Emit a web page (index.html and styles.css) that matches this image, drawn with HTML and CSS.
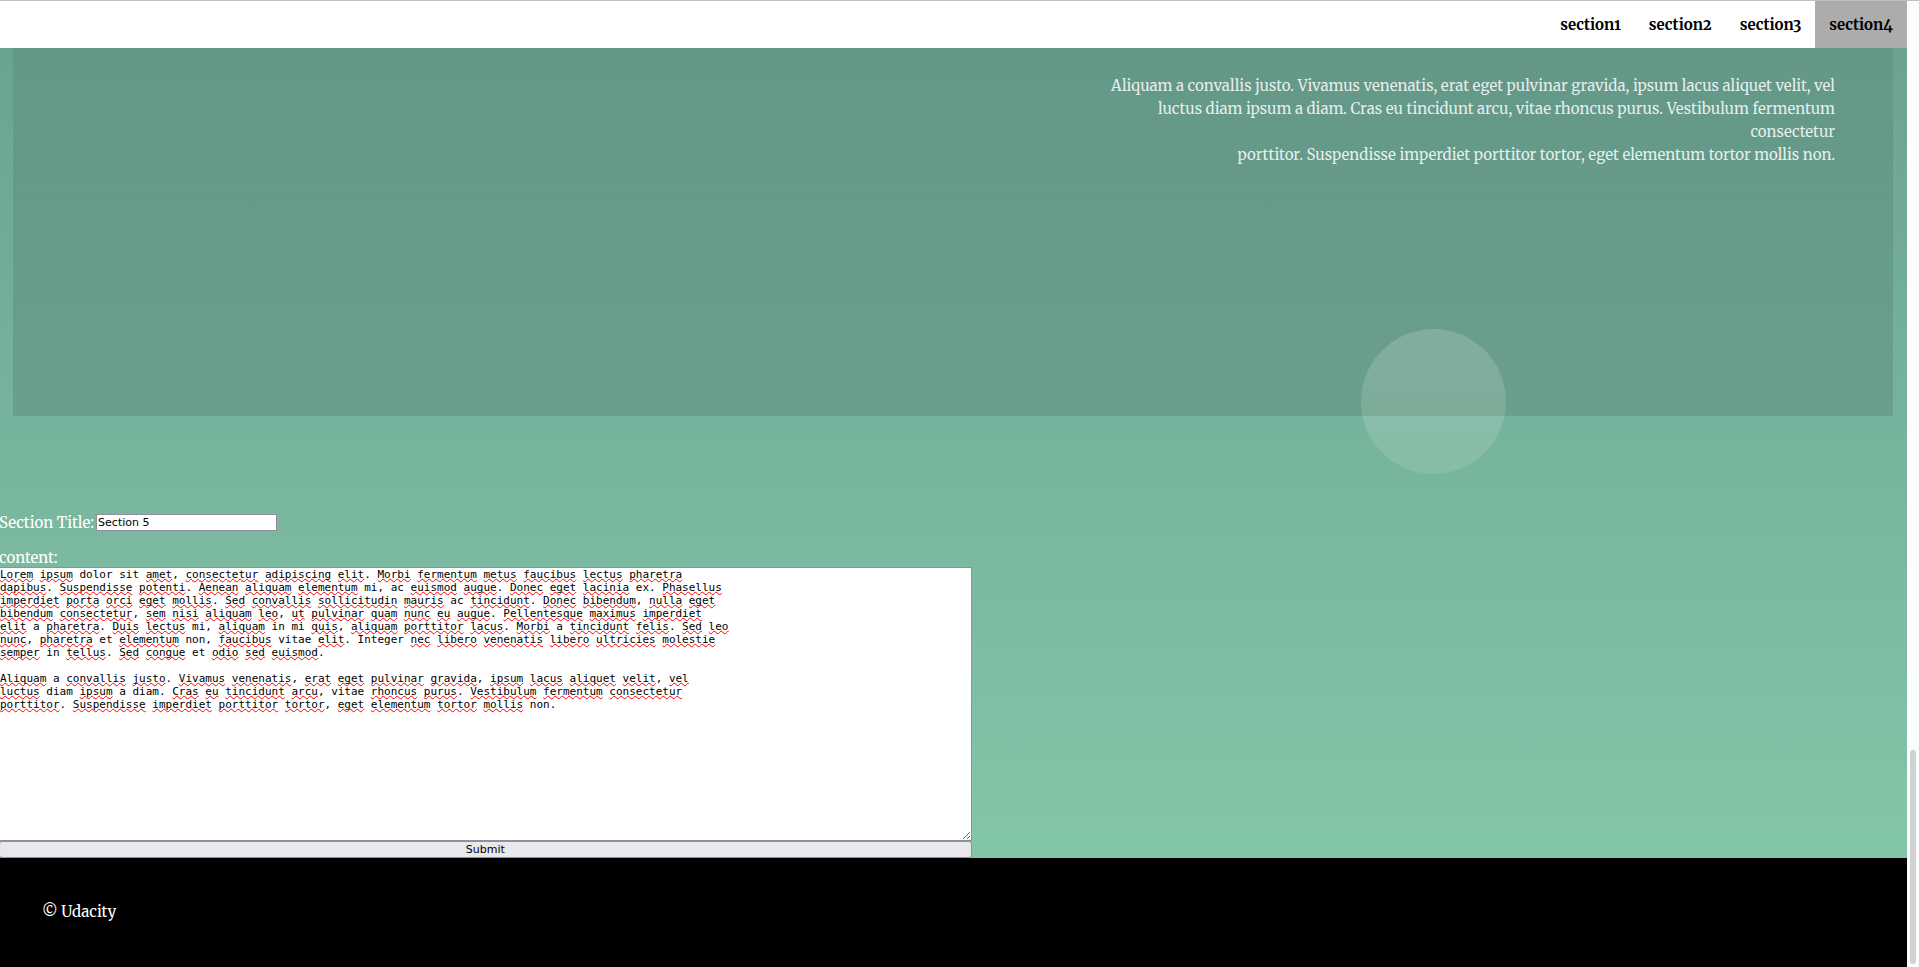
FILE: index.html
```html
<!DOCTYPE html>
<html lang="en">
<head>
<meta charset="utf-8">
<title>Landing page</title>
<link rel="stylesheet" href="styles.css">
</head>
<body>
<div class="page">
  <header class="navbar">
    <nav class="menu">
      <a class="menu-link" href="#section1">section1</a>
      <a class="menu-link" href="#section2">section2</a>
      <a class="menu-link" href="#section3">section3</a>
      <a class="menu-link active" href="#section4">section4</a>
    </nav>
  </header>
  <main class="main">
    <section class="section" id="section4">
      <p class="section-text">Aliquam a convallis justo. Vivamus venenatis, erat eget pulvinar gravida, ipsum lacus aliquet velit, vel<br>luctus diam ipsum a diam. Cras eu tincidunt arcu, vitae rhoncus purus. Vestibulum fermentum<br>consectetur<br>porttitor. Suspendisse imperdiet porttitor tortor, eget elementum tortor mollis non.</p>
      <span class="circle"></span>
    </section>
    <form class="form">
      <div class="title-row">
        <label for="title">Section Title:</label>
        <input class="title-input" id="title" type="text" value="Section 5">
      </div>
      <label class="content-label" for="content">content:</label>
      <div class="editor">
        <div class="squiggles" aria-hidden="true"></div>
        <textarea class="content" id="content" spellcheck="false">Lorem ipsum dolor sit amet, consectetur adipiscing elit. Morbi fermentum metus faucibus lectus pharetra
dapibus. Suspendisse potenti. Aenean aliquam elementum mi, ac euismod augue. Donec eget lacinia ex. Phasellus
imperdiet porta orci eget mollis. Sed convallis sollicitudin mauris ac tincidunt. Donec bibendum, nulla eget
bibendum consectetur, sem nisi aliquam leo, ut pulvinar quam nunc eu augue. Pellentesque maximus imperdiet
elit a pharetra. Duis lectus mi, aliquam in mi quis, aliquam porttitor lacus. Morbi a tincidunt felis. Sed leo
nunc, pharetra et elementum non, faucibus vitae elit. Integer nec libero venenatis libero ultricies molestie
semper in tellus. Sed congue et odio sed euismod.

Aliquam a convallis justo. Vivamus venenatis, erat eget pulvinar gravida, ipsum lacus aliquet velit, vel
luctus diam ipsum a diam. Cras eu tincidunt arcu, vitae rhoncus purus. Vestibulum fermentum consectetur
porttitor. Suspendisse imperdiet porttitor tortor, eget elementum tortor mollis non.</textarea>
      </div>
      <button class="submit" type="submit">Submit</button>
    </form>
  </main>
  <footer class="footer"><p class="copyright">© Udacity</p></footer>
</div>
<div class="scrollbar"><div class="thumb"></div></div>
<script src="script.js"></script>
</body>
</html>
```

FILE: styles.css
```css
* { box-sizing: border-box; }

body {
  margin: 0;
  min-height: 100vh;
  display: flex;
  border-top: 1px solid #c0c0c0;
  background: #fcfcfc;
  color: #fff;
  font-family: Merriweather, "Liberation Serif", serif;
  font-size: 15px;
  font-variant-numeric: oldstyle-nums;
  line-height: 23px;
}

.page {
  flex: 1;
  min-width: 0;
  display: flex;
  flex-direction: column;
}

.navbar { background: #fff; }

.menu {
  display: flex;
  justify-content: flex-end;
}

.menu-link {
  padding: 12px 14px;
  color: #000;
  font-weight: bold;
  text-decoration: none;
}

.menu-link.active { background: #acacac; }

.main {
  flex: 1;
  background: linear-gradient(#6ba392, #84c6a8);
}

.section {
  position: relative;
  min-height: 368px;
  margin: 0 14px 0 13px;
  padding: 26px 58px 0;
  background: linear-gradient(rgba(0, 0, 0, 0.07), rgba(0, 0, 0, 0.11));
}

.section-text {
  margin: 0;
  color: rgba(255, 255, 255, 0.85);
  text-align: right;
}

.circle {
  position: absolute;
  right: 387px;
  bottom: -58px;
  width: 145px;
  height: 145px;
  border-radius: 50%;
  background: linear-gradient(rgba(255, 255, 255, 0.17), rgba(255, 255, 255, 0.11));
}

.form {
  display: flex;
  flex-direction: column;
  width: 51%;
  margin-left: -1px;
  padding-top: 95px;
}

.title-row {
  display: flex;
  align-items: center;
  gap: 2px;
  margin-bottom: 14px;
}

.title-input {
  width: 181px;
  height: 17px;
  padding: 0 1px;
  border: 1px solid #8f8f9d;
  background: #fff;
  color: #000;
  font: 11px "DejaVu Sans", sans-serif;
}

.content-label { line-height: 19px; }

.editor {
  position: relative;
  height: 274px;
  background: #fff;
}

.content,
.squiggles {
  width: 100%;
  height: 100%;
  margin: 0;
  padding: 0;
  border: 1px solid #8f8f9d;
  font: 11px/13px "DejaVu Sans Mono", monospace;
  white-space: pre-wrap;
}

.content {
  position: relative;
  display: block;
  background: transparent;
  color: #000;
}

.squiggles {
  position: absolute;
  inset: 0;
  overflow: hidden;
}

.typo {
  text-decoration: underline wavy #f00 1px;
  text-decoration-skip-ink: none;
  text-underline-offset: 0;
}

.submit {
  height: 17px;
  padding: 0;
  border: 1px solid #8f8f9d;
  border-radius: 3px;
  background: #e9e9ed;
  color: #000;
  font: 11px/15px "DejaVu Sans", sans-serif;
}

.footer {
  padding: 42px 42px 44px;
  background: #000;
}

.copyright { margin: 0; }

.scrollbar {
  display: flex;
  align-items: flex-end;
  justify-content: center;
  width: 12px;
  padding-bottom: 3px;
}

.thumb {
  width: 6px;
  height: 214px;
  border-radius: 3px;
  background: #d1d1d1;
}
```

FILE: script.js
```js
// Underlines unknown words on a layer of blanks behind the text box.
const known = new Set(["dolor", "sit", "mi", "ac", "ex", "a", "in", "et", "non", "vitae", "Integer", "diam"]);
const field = document.querySelector(".content");
const layer = document.querySelector(".squiggles");

function mark() {
  layer.replaceChildren();
  for (const part of field.value.match(/[A-Za-z]+|\n|[^A-Za-z\n]+/g) || []) {
    if (part === "\n") {
      layer.append("\n");
      continue;
    }
    const blank = "\u00a0".repeat(part.length);
    if (/[A-Za-z]/.test(part) && !known.has(part)) {
      const span = document.createElement("span");
      span.className = "typo";
      span.textContent = blank;
      layer.append(span);
    } else {
      layer.append(blank);
    }
  }
}

field.addEventListener("input", mark);
mark();
```
